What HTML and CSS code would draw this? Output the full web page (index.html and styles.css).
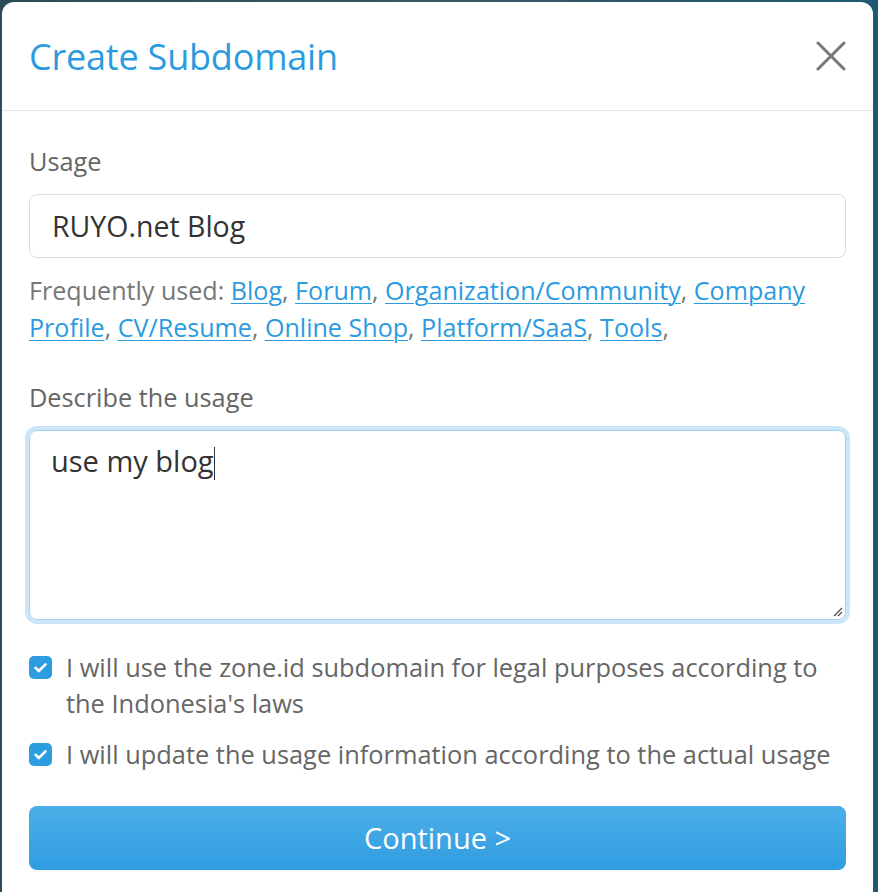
FILE: index.html
```html
<!DOCTYPE html>
<html lang="en">
<head>
<meta charset="utf-8">
<title>Create Subdomain</title>
<link rel="stylesheet" href="styles.css">
</head>
<body>
<div class="modal">
  <div class="modal-header">
    <h1 class="modal-title">Create Subdomain</h1>
    <button class="close" aria-label="Close">
      <svg width="30" height="30" viewBox="0 0 30 30"><path d="M2 2 L28 28 M28 2 L2 28" stroke="#777" stroke-width="3" stroke-linecap="round" fill="none"/></svg>
    </button>
  </div>
  <div class="modal-body">
    <label class="field-label">Usage</label>
    <div class="input">RUYO.net Blog</div>
    <p class="hint">Frequently used: <a href="#">Blog</a>, <a href="#">Forum</a>, <a href="#">Organization/Community</a>, <a href="#">Company Profile</a>, <a href="#">CV/Resume</a>, <a href="#">Online Shop</a>, <a href="#">Platform/SaaS</a>, <a href="#">Tools</a>,</p>
    <label class="field-label">Describe the usage</label>
    <div class="textarea">use my blog<span class="caret"></span>
      <svg class="grip" width="12" height="12" viewBox="0 0 12 12"><path d="M11 3 L3 11 M11 7 L7 11" stroke="#555" stroke-width="1.4" fill="none"/></svg>
    </div>
    <div class="check-row">
      <span class="checkbox"><svg width="23" height="23" viewBox="0 0 23 23"><path d="M6.5 11.8 L9.8 15 L16.5 8.3" stroke="#fff" stroke-width="2.6" stroke-linecap="round" stroke-linejoin="round" fill="none"/></svg></span>
      <span class="check-text">I will use the zone.id subdomain for legal purposes according to the Indonesia's laws</span>
    </div>
    <div class="check-row">
      <span class="checkbox"><svg width="23" height="23" viewBox="0 0 23 23"><path d="M6.5 11.8 L9.8 15 L16.5 8.3" stroke="#fff" stroke-width="2.6" stroke-linecap="round" stroke-linejoin="round" fill="none"/></svg></span>
      <span class="check-text">I will update the usage information according to the actual usage</span>
    </div>
    <button class="btn-primary">Continue &gt;</button>
  </div>
</div>
</body>
</html>
```
FILE: styles.css
```css
html, body {
  margin: 0;
  padding: 0;
}
body {
  background: linear-gradient(90deg, #2c4b58 0%, #3a5662 50%, #1d5a72 100%);
  font-family: "Open Sans", "Noto Sans", sans-serif;
  height: 892px;
  overflow: hidden;
}
.modal {
  margin: 2px 5px 0 2px;
  background: #fff;
  border-radius: 12px 12px 0 0;
  height: 890px;
}
.modal-header {
  height: 108px;
  border-bottom: 1px solid #e3e3e3;
  display: flex;
  align-items: center;
  justify-content: space-between;
  padding: 0 27px;
}
.modal-title {
  margin: 0;
  font-weight: 400;
  font-size: 36px;
  color: #2b9be0;
  letter-spacing: -0.2px;
}
.close {
  border: 0;
  background: none;
  padding: 0;
  width: 30px;
  height: 30px;
  display: block;
}
.close svg { display: block; }
.modal-body {
  padding: 32px 27px 0;
}
.field-label {
  display: block;
  font-size: 25.3px;
  line-height: 36px;
  color: #666;
  margin: 0 0 15px;
}
.input {
  height: 62px;
  border: 1px solid #dcdcdc;
  border-radius: 8px;
  padding: 0 22px;
  font-size: 28.5px;
  line-height: 62px;
  color: #333;
}
.hint {
  margin: 14px 0 33px;
  font-size: 25.1px;
  line-height: 37px;
  color: #777;
}
.hint a {
  color: #2b9be0;
  text-decoration: underline;
  text-underline-offset: 3px;
  text-decoration-thickness: 1px;
}
.textarea {
  position: relative;
  height: 190px;
  border: 1px solid #a3d3f0;
  box-shadow: 0 0 0 4px #cde6f7;
  border-radius: 8px;
  padding: 11px 21px;
  box-sizing: border-box;
  font-size: 29px;
  line-height: 38px;
  color: #333;
  margin: 0 0 29px;
}
.caret {
  display: inline-block;
  width: 1px;
  height: 33px;
  background: #333;
  vertical-align: -8px;
}
.grip {
  position: absolute;
  right: 2px;
  bottom: 2px;
}
.check-row {
  display: flex;
  align-items: flex-start;
  gap: 14px;
  margin-bottom: 15px;
}
.checkbox {
  flex: none;
  width: 23px;
  height: 23px;
  border-radius: 5px;
  background: #2d9de2;
  margin-top: 7px;
}
.checkbox svg { display: block; }
.check-text {
  font-size: 25.4px;
  line-height: 36px;
  color: #666;
}
.btn-primary {
  display: block;
  width: 100%;
  height: 64px;
  margin-top: 34px;
  border: 0;
  border-radius: 8px;
  background: linear-gradient(180deg, #4cafe9 0%, #2f9ce0 100%);
  color: #fff;
  font-family: "Open Sans", "Noto Sans", sans-serif;
  font-size: 29px;
  line-height: 64px;
  padding: 0;
}
```
